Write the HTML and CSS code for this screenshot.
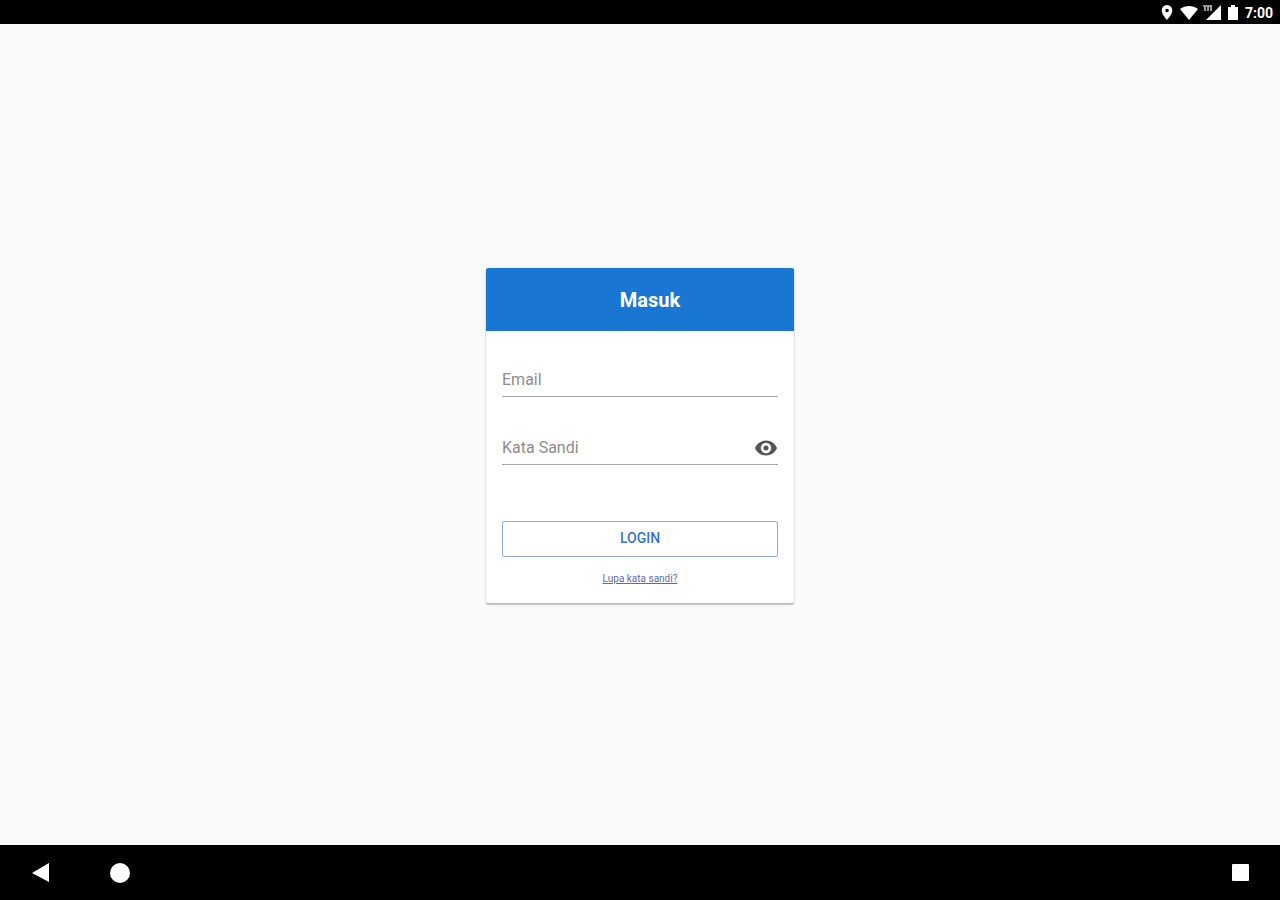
FILE: index.html
```
<!DOCTYPE html>
<html lang="id">
<head>
  <meta charset="UTF-8" />
  <meta name="viewport" content="width=device-width, initial-scale=1" />
  <title>Masuk</title>
  <link rel="stylesheet" href="styles.css">
</head>
<body>
  <!-- Status bar -->
  <header class="status-bar">
    <svg class="icon-pin" width="12" height="16" viewBox="0 0 12 16" aria-hidden="true">
      <path fill-rule="evenodd" d="M6 0a5.300 5.300 0 0 0-5.300 5.500C.7 9.500 6 15 6 15s5.300-5.500 5.300-9.500A5.300 5.300 0 0 0 6 0zm0 3.700a1.800 1.800 0 1 1 0 3.600 1.800 1.800 0 0 1 0-3.600z"/>
    </svg>
    <svg class="icon-wifi" width="18" height="16" viewBox="0 0 18 16" aria-hidden="true">
      <path d="M0 4C5-.1 13-.1 18 4L9 15z"/>
    </svg>
    <svg class="icon-signal" width="19" height="16" viewBox="0 0 19 16" aria-hidden="true">
      <path d="M19 0v15H4z"/>
      <path class="signal-gap" d="M0 0h11v8H0z"/>
      <path class="signal-tag" d="M1 0h9v2H1zM2 2h2v4H2zM5 2h2v4H5zM8 2h2v4H8z"/>
    </svg>
    <svg class="icon-battery" width="10" height="16" viewBox="0 0 10 16" aria-hidden="true">
      <path d="M3 0h4v2h3v13H0V2h3z"/>
    </svg>
    <span class="clock">7:00</span>
  </header>

  <main class="page">
    <form class="card">
      <h1 class="card-title">Masuk</h1>
      <div class="card-body">
        <div class="field">
          <input type="email" placeholder="Email" aria-label="Email">
        </div>
        <div class="field">
          <input type="password" placeholder="Kata Sandi" aria-label="Kata Sandi">
          <button type="button" class="toggle-password" aria-label="Tampilkan kata sandi">
            <svg width="24" height="24" viewBox="0 0 24 24" aria-hidden="true">
              <path fill-rule="evenodd" d="M12 4.500C7 4.500 2.730 7.610 1 12c1.730 4.390 6 7.500 11 7.500s9.270-3.110 11-7.500c-1.730-4.390-6-7.500-11-7.500zM12 17.200a5.200 5.200 0 1 1 0-10.400 5.200 5.200 0 0 1 0 10.400z"/>
              <circle cx="12" cy="12" r="2.500"/>
            </svg>
          </button>
        </div>
        <button type="submit" class="login-btn">LOGIN</button>
        <a class="forgot" href="#">Lupa kata sandi?</a>
      </div>
    </form>
  </main>

  <!-- Navigation bar -->
  <nav class="nav-bar">
    <button type="button" aria-label="Kembali">
      <svg width="20" height="20" viewBox="0 0 20 20"><path d="M19 0v19L2 10z"/></svg>
    </button>
    <button type="button" aria-label="Beranda">
      <svg width="20" height="20" viewBox="0 0 20 20"><circle cx="10" cy="10" r="10"/></svg>
    </button>
    <button type="button" class="recent" aria-label="Terbaru">
      <svg width="20" height="20" viewBox="0 0 20 20"><rect x="2" y="1" width="17" height="17" rx="1"/></svg>
    </button>
  </nav>
</body>
</html>
```
FILE: styles.css
```
* {
  box-sizing: border-box;
}

body {
  margin: 0;
  min-height: 100vh;
  display: flex;
  flex-direction: column;
  font-family: Roboto, "Liberation Sans", sans-serif;
  background: #fafafa;
}

button {
  padding: 0;
  border: none;
  background: none;
  font-family: inherit;
  cursor: pointer;
}

svg {
  display: block;
}

/* Status bar */
.status-bar {
  display: flex;
  justify-content: flex-end;
  align-items: center;
  gap: 7px;
  height: 24px;
  padding: 2px 7px 0 0;
  background: #000;
  color: #fff;
}

.status-bar svg {
  fill: #fff;
}

.icon-wifi {
  margin-right: -3px;
}

.status-bar .signal-gap {
  fill: #000;
}

.status-bar .signal-tag {
  fill: #999;
}

.clock {
  font-size: 14px;
  font-weight: 700;
  line-height: 16px;
}

/* Login card */
.page {
  flex: 1;
  display: flex;
  justify-content: center;
  align-items: center;
  padding: 18px 16px 16px;
}

.card {
  width: 100%;
  max-width: 308px;
  background: #fff;
  border-radius: 2px;
  overflow: hidden;
  box-shadow: 0 1px 3px rgba(0, 0, 0, 0.2), 0 2px 1px rgba(0, 0, 0, 0.14);
}

/* the title is centered in the space right of its indent */
.card-title {
  margin: 0;
  padding: 20px 16px 19px 36px;
  background: #1976d2;
  color: #fff;
  font-size: 20px;
  font-weight: 700;
  line-height: 24px;
  text-align: center;
}

.card-body {
  display: flex;
  flex-direction: column;
  padding: 30px 16px 16px;
}

.field {
  display: flex;
  align-items: center;
  height: 36px;
  margin-bottom: 32px;
  padding-top: 2px;
  border-bottom: 1px solid #a8a8a8;
}

.field input {
  flex: 1;
  min-width: 0;
  padding: 0;
  border: none;
  outline: none;
  background: none;
  color: #212121;
  font-family: inherit;
  font-size: 16px;
  line-height: 24px;
}

.field input::placeholder {
  color: #8c8c8c;
  opacity: 1;
}

.toggle-password svg {
  fill: #555;
}

.login-btn {
  height: 36px;
  margin: 24px 0 14px;
  padding-bottom: 2px;
  border: 1px solid #8fa8de;
  border-radius: 2px;
  color: #3674d0;
  font-size: 14px;
  font-weight: 500;
}

.forgot {
  align-self: center;
  color: #5c6bab;
  font-size: 10px;
  line-height: 16px;
}

/* Navigation bar */
.nav-bar {
  display: flex;
  align-items: center;
  height: 55px;
  padding: 0 30px;
  gap: 60px;
  background: #000;
}

.nav-bar svg {
  fill: #fff;
}

.nav-bar .recent {
  margin-left: auto;
}
```
